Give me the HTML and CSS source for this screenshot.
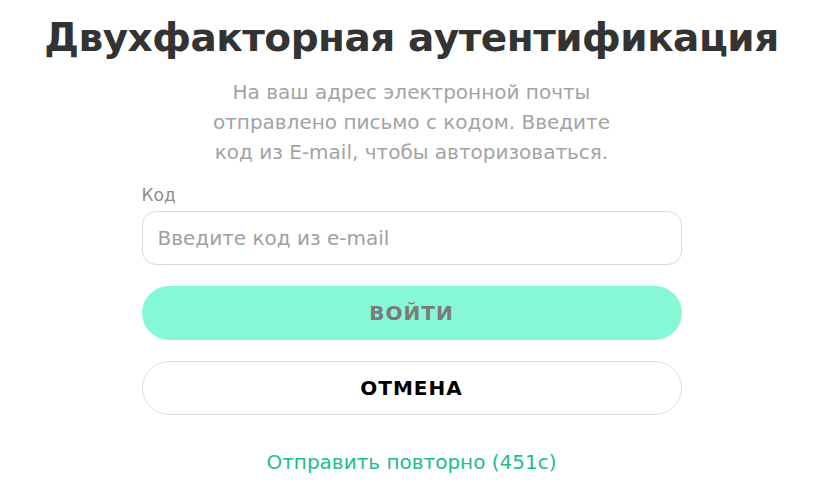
FILE: index.html
```html
<!DOCTYPE html>
<html lang="ru">
<head>
<meta charset="utf-8">
<link rel="stylesheet" href="styles.css">
</head>
<body>
<main class="page">
  <h1 class="title">Двухфакторная аутентификация</h1>
  <p class="lead">На ваш адрес электронной почты отправлено письмо с кодом. Введите код из E-mail, чтобы авторизоваться.</p>
  <form class="form">
    <label class="label" for="code">Код</label>
    <input class="input" id="code" type="text" placeholder="Введите код из e-mail">
    <button class="btn btn-primary" type="button">Войти</button>
    <button class="btn btn-outline" type="button">Отмена</button>
    <a class="resend" href="#">Отправить повторно (451с)</a>
  </form>
</main>
</body>
</html>
```
FILE: styles.css
```css
* { box-sizing: border-box; }
html, body { margin: 0; padding: 0; background: #fff; }
body { font-family: "DejaVu Sans", "Open Sans", sans-serif; }
.page {
  width: 823px;
  display: flex;
  flex-direction: column;
  align-items: center;
  padding-top: 14px;
}
.title {
  margin: 0;
  font-size: 39px;
  line-height: 48px;
  font-weight: 700;
  color: #333333;
  white-space: nowrap;
  letter-spacing: -0.5px;
}
.lead {
  margin: 15px 0 0;
  width: 420px;
  text-align: center;
  font-size: 20px;
  line-height: 30px;
  color: #a3a3a3;
}
.form {
  width: 540px;
  display: flex;
  flex-direction: column;
  margin-top: 17px;
}
.label {
  font-size: 17px;
  line-height: 22px;
  color: #8c8c8c;
  margin-bottom: 5px;
}
.input {
  height: 54px;
  border: 1px solid #d9d9d9;
  border-radius: 14px;
  padding: 0 15px;
  font-family: inherit;
  font-size: 20px;
  color: #333;
  outline: none;
}
.input::placeholder { color: #a0a0a0; }
.btn {
  height: 54px;
  border-radius: 27px;
  font-family: inherit;
  font-size: 20px;
  font-weight: 700;
  text-transform: uppercase;
  letter-spacing: 1px;
  cursor: pointer;
}
.btn-primary {
  margin-top: 21px;
  background: #86f8d6;
  border: none;
  color: #7b7b7b;
}
.btn-outline {
  margin-top: 21px;
  background: #fff;
  border: 1px solid #dcdcdc;
  color: #000;
}
.resend {
  margin-top: 34px;
  align-self: center;
  font-size: 20px;
  line-height: 26px;
  color: #21bd8b;
  text-decoration: none;
}
```
